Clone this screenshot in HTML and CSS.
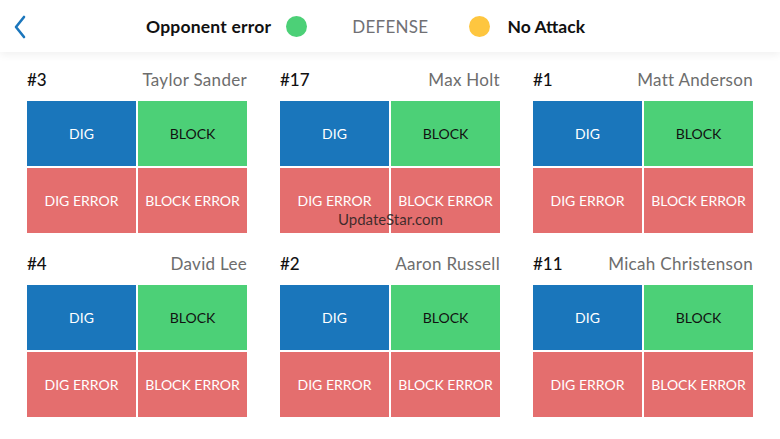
FILE: index.html
```html
<!DOCTYPE html>
<html lang="en">
<head>
    <meta charset="UTF-8">
    <meta name="viewport" content="width=device-width, initial-scale=1.0">
    <title>Defense</title>
    <link rel="stylesheet" href="styles.css">
</head>
<body>
    <header class="topbar">
        <button class="back" aria-label="Back">
            <svg width="14" height="24" viewBox="0 0 14 24">
                <path d="M11 2 L3 12 L11 22" fill="none" stroke="#1b76bc" stroke-width="2.6" stroke-linecap="round" stroke-linejoin="round"/>
            </svg>
        </button>
        <div class="legend">
            <span class="legend-label">Opponent error</span>
            <span class="dot dot-green"></span>
            <span class="mode">DEFENSE</span>
            <span class="dot dot-yellow"></span>
            <span class="legend-label short">No Attack</span>
        </div>
    </header>

    <main class="players">
        <section class="player">
            <div class="player-head"><span class="num">#3</span><span class="name">Taylor Sander</span></div>
            <div class="actions">
                <div class="cell dig">DIG</div>
                <div class="cell block">BLOCK</div>
                <div class="cell error">DIG ERROR</div>
                <div class="cell error">BLOCK ERROR</div>
            </div>
        </section>
        <section class="player">
            <div class="player-head"><span class="num">#17</span><span class="name">Max Holt</span></div>
            <div class="actions">
                <div class="cell dig">DIG</div>
                <div class="cell block">BLOCK</div>
                <div class="cell error">DIG ERROR</div>
                <div class="cell error">BLOCK ERROR</div>
            </div>
        </section>
        <section class="player">
            <div class="player-head"><span class="num">#1</span><span class="name">Matt Anderson</span></div>
            <div class="actions">
                <div class="cell dig">DIG</div>
                <div class="cell block">BLOCK</div>
                <div class="cell error">DIG ERROR</div>
                <div class="cell error">BLOCK ERROR</div>
            </div>
        </section>
        <section class="player">
            <div class="player-head"><span class="num">#4</span><span class="name">David Lee</span></div>
            <div class="actions">
                <div class="cell dig">DIG</div>
                <div class="cell block">BLOCK</div>
                <div class="cell error">DIG ERROR</div>
                <div class="cell error">BLOCK ERROR</div>
            </div>
        </section>
        <section class="player">
            <div class="player-head"><span class="num">#2</span><span class="name">Aaron Russell</span></div>
            <div class="actions">
                <div class="cell dig">DIG</div>
                <div class="cell block">BLOCK</div>
                <div class="cell error">DIG ERROR</div>
                <div class="cell error">BLOCK ERROR</div>
            </div>
        </section>
        <section class="player">
            <div class="player-head"><span class="num">#11</span><span class="name">Micah Christenson</span></div>
            <div class="actions">
                <div class="cell dig">DIG</div>
                <div class="cell block">BLOCK</div>
                <div class="cell error">DIG ERROR</div>
                <div class="cell error">BLOCK ERROR</div>
            </div>
        </section>
    </main>

    <div class="watermark">UpdateStar.com</div>
</body>
</html>
```

FILE: styles.css
```css
* {
    margin: 0;
    padding: 0;
    box-sizing: border-box;
}

body {
    font-family: Lato, "Open Sans", sans-serif;
    background: #fff;
    color: #111;
    width: 780px;
    height: 439px;
    overflow: hidden;
    position: relative;
}

.topbar {
    height: 52px;
    display: flex;
    align-items: center;
    position: relative;
    box-shadow: 0 3px 8px rgba(0, 0, 0, 0.06);
}

.back {
    background: none;
    border: none;
    width: 14px;
    height: 24px;
    margin-left: 13px;
    margin-top: 2px;
}

.legend {
    display: flex;
    align-items: center;
    margin-left: 119px;
}

.legend-label {
    font-size: 17.5px;
    font-weight: 700;
    color: #111;
    letter-spacing: 0.2px;
}

.legend-label.short {
    letter-spacing: 0;
}

.dot {
    width: 21px;
    height: 21px;
    border-radius: 50%;
    display: inline-block;
}

.dot-green {
    background: #4cd077;
    margin: 0 45px 0 15px;
}

.dot-yellow {
    background: #fec63f;
    margin: 0 18px 0 40px;
}

.mode {
    font-size: 17px;
    color: #707074;
    letter-spacing: 0.3px;
}

.players {
    display: grid;
    grid-template-columns: repeat(3, 220px);
    column-gap: 33px;
    row-gap: 19px;
    padding: 16px 27px 0;
}

.player-head {
    display: flex;
    justify-content: space-between;
    align-items: center;
    height: 22px;
    margin-bottom: 11px;
    font-size: 17px;
}

.num {
    font-weight: 500;
    color: #111;
}

.name {
    color: #6d6d6d;
    letter-spacing: 0.3px;
}

.actions {
    display: grid;
    grid-template-columns: 1fr 1fr;
    grid-template-rows: 65px 65px;
    gap: 2px;
}

.cell {
    display: flex;
    align-items: center;
    justify-content: center;
    font-size: 14px;
    color: #fff;
}

.dig {
    background: #1a76bb;
}

.block {
    background: #4cd077;
    color: #111;
}

.error {
    background: #e46e6e;
}

.watermark {
    position: absolute;
    left: 338px;
    top: 210px;
    font-size: 15px;
    color: rgba(30, 30, 30, 0.85);
}
```
